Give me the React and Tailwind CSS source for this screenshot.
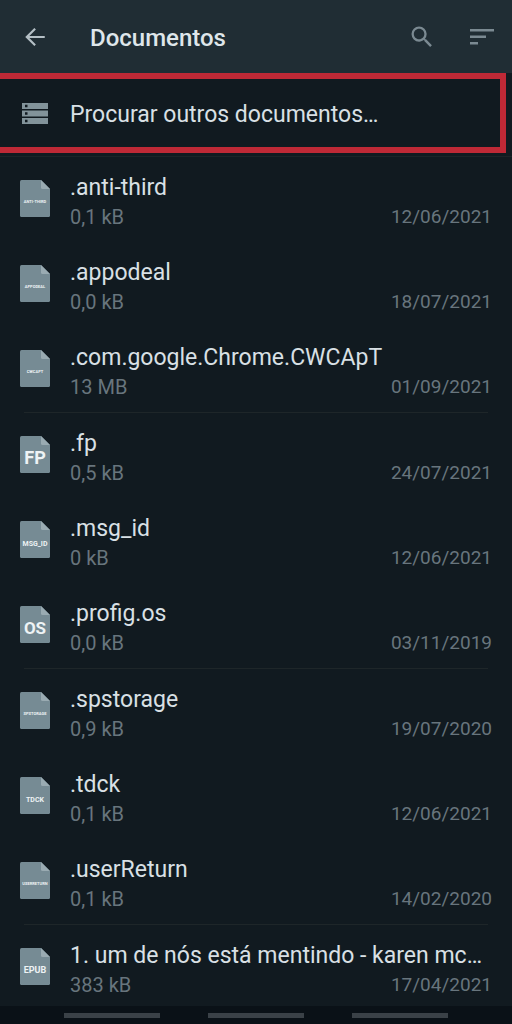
const files = [
  { name: '.anti-third', size: '0,1 kB', date: '12/06/2021', ext: 'ANTI-THIRD', extSize: 4 },
  { name: '.appodeal', size: '0,0 kB', date: '18/07/2021', ext: 'APPODEAL', extSize: 4 },
  { name: '.com.google.Chrome.CWCApT', size: '13 MB', date: '01/09/2021', ext: 'CWCAPT', extSize: 4, divider: true },
  { name: '.fp', size: '0,5 kB', date: '24/07/2021', ext: 'FP', extSize: 18 },
  { name: '.msg_id', size: '0 kB', date: '12/06/2021', ext: 'MSG_ID', extSize: 7 },
  { name: '.profig.os', size: '0,0 kB', date: '03/11/2019', ext: 'OS', extSize: 17, divider: true },
  { name: '.spstorage', size: '0,9 kB', date: '19/07/2020', ext: 'SPSTORAGE', extSize: 4 },
  { name: '.tdck', size: '0,1 kB', date: '12/06/2021', ext: 'TDCK', extSize: 7 },
  { name: '.userReturn', size: '0,1 kB', date: '14/02/2020', ext: 'USERRETURN', extSize: 4, divider: true },
  { name: '1. um de nós está mentindo - karen mc…', size: '383 kB', date: '17/04/2021', ext: 'EPUB', extSize: 9 },
]

function FileIcon({ ext, extSize }) {
  return (
    <svg width="30" height="37" viewBox="0 0 30 37" className="mt-[7px] shrink-0" aria-hidden="true">
      <path d="M1.5 0H21L30 9V35.5Q30 37 28.5 37H1.5Q0 37 0 35.5V1.5Q0 0 1.5 0Z" fill="#768b94" />
      <path d="M21 0L30 9H22.5Q21 9 21 7.5Z" fill="#9aabb2" />
      <text x="15" y={22 + extSize * 0.36} textAnchor="middle" fontSize={extSize} fontWeight="700" fill="#eef3f5">{ext}</text>
    </svg>
  )
}

function FileRow({ file }) {
  return (
    <li className="group">
      <button type="button" className="flex w-full items-start gap-5 px-5 pt-4 pb-[11px] text-left group-last:pb-[7px]">
        <FileIcon ext={file.ext} extSize={file.extSize} />
        <span className="min-w-0 flex-1">
          <span className="block truncate text-[23px] leading-[30px] text-[#d9e0e5]">{file.name}</span>
          <span className="flex items-center justify-between leading-7 text-[#68757d]">
            <span className="text-[20px]">{file.size}</span>
            <span className="text-[19px]">{file.date}</span>
          </span>
        </span>
      </button>
      {file.divider && <div className="mx-6 h-px bg-[#1e2629]" />}
    </li>
  )
}

export default function App() {
  return (
    <div className="min-h-screen bg-[#111a20] font-[Roboto,sans-serif]">
      <header className="flex h-[73px] items-center bg-[#202d34] pr-[18px] pl-[22px] text-[#7b8a92]">
        <button type="button" aria-label="Voltar" className="text-[#b4bfc5]">
          <svg width="26" height="26" viewBox="0 0 24 24" fill="currentColor">
            <path d="M21 11H6.8l6-6L11.400 3.600 3 12l8.400 8.400 1.400-1.400-6-6H21z" />
          </svg>
        </button>
        <h1 className="ml-[42px] flex-1 pt-0.5 text-[24px] font-medium text-[#dfe6ea]">Documentos</h1>
        <button type="button" aria-label="Pesquisar">
          <svg width="28" height="28" viewBox="0 0 24 24" fill="currentColor">
            <path d="M15.500 14h-.79l-.28-.27A6.470 6.470 0 0 0 16 9.500 6.500 6.500 0 1 0 9.500 16c1.610 0 3.090-.59 4.230-1.570l.27.28v.79l5 4.990L20.490 19l-4.990-5zm-6 0C7.010 14 5 11.990 5 9.500S7.010 5 9.500 5 14 7.010 14 9.500 11.990 14 9.500 14z" />
          </svg>
        </button>
        <button type="button" aria-label="Ordenar" className="ml-[34px]">
          <svg width="24" height="16" viewBox="0 0 24 16" fill="currentColor">
            <path d="M0 0h24v2.400H0zM0 6.500h16v2.400H0zM0 13h8v2.400H0z" />
          </svg>
        </button>
      </header>

      <main>
        <button type="button" className="flex h-20 w-[calc(100%-6px)] items-center gap-[22px] border-y-6 border-r-6 border-[#bf2936] pl-[22px] text-left">
          <svg width="26" height="21" viewBox="0 0 26 21" aria-hidden="true">
            <path d="M0 0h26v6H0zM0 7.500h26v6H0zM0 15h26v6H0z" fill="#82939a" />
            <path d="M3 1.800h2.500v2.500H3zM3 9.300h2.500v2.500H3zM3 16.800h2.500v2.500H3z" fill="#111a20" />
          </svg>
          <span className="pt-1 text-[23px] text-[#d9e0e5]">Procurar outros documentos…</span>
        </button>

        <ul className="mt-[3px] border-t border-[#1b2428]">
          {files.map((file) => (
            <FileRow key={file.name} file={file} />
          ))}
        </ul>
      </main>

      {/* system navigation hints */}
      <nav aria-label="Sistema" className="flex h-[18px] items-center justify-center gap-12 bg-[#0a1117]">
        <button type="button" aria-label="Recentes" className="h-[5px] w-24 bg-[#3a4147]" />
        <button type="button" aria-label="Início" className="h-[5px] w-24 bg-[#3a4147]" />
        <button type="button" aria-label="Retornar" className="h-[5px] w-24 bg-[#3a4147]" />
      </nav>
    </div>
  )
}
